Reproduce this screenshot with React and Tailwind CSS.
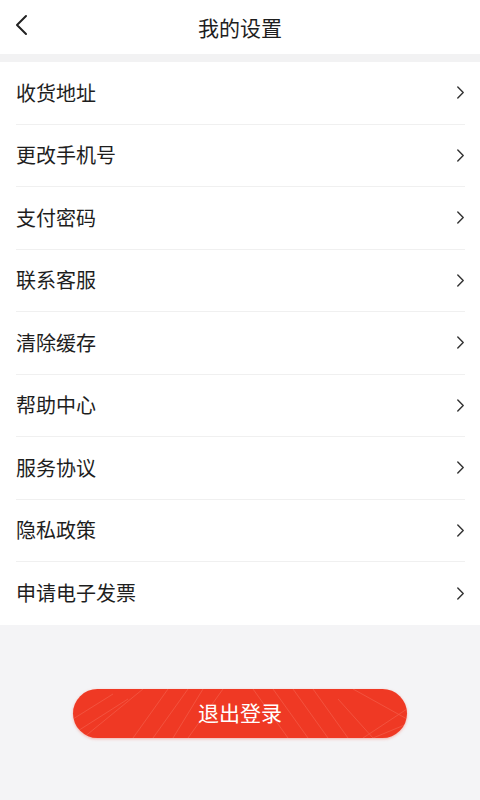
const items = [
  '收货地址',
  '更改手机号',
  '支付密码',
  '联系客服',
  '清除缓存',
  '帮助中心',
  '服务协议',
  '隐私政策',
  '申请电子发票',
];

function Chevron({ className }) {
  return (
    <svg viewBox="0 0 10 16" className={className} fill="none" stroke="currentColor" strokeWidth="1.6" strokeLinecap="round" strokeLinejoin="round">
      <path d="M2 2l6 6-6 6" />
    </svg>
  );
}

export default function App() {
  return (
    <div className="w-[480px] h-[800px] bg-[#f4f4f6] flex flex-col font-['Noto_Sans_CJK_SC',sans-serif] text-[#1e1e1e]">
      <header className="h-[54px] bg-white flex items-center relative shrink-0">
        <svg viewBox="0 0 14 22" className="absolute left-[14px] top-[14px] w-[14px] h-[22px] text-[#222]" fill="none" stroke="currentColor" strokeWidth="2" strokeLinecap="round" strokeLinejoin="round">
          <path d="M12 2L3 11l9 9" />
        </svg>
        <h1 className="flex-1 text-center text-[21px] leading-none">我的设置</h1>
      </header>
      <div className="h-[8px] bg-[#f2f2f3] shrink-0" />
      <ul className="bg-white">
        {items.map((label, i) => (
          <li key={label} className="h-[62.5px] pl-[16px] pr-[15px]">
            <div className={`h-full flex items-center justify-between ${i < items.length - 1 ? 'border-b border-[#f0f0f0]' : ''}`}>
              <span className="text-[20px] leading-none">{label}</span>
              <Chevron className="w-[9px] h-[15px] text-[#333]" />
            </div>
          </li>
        ))}
      </ul>
      <div className="flex-1 flex justify-center pt-[64px]">
        <button className="relative overflow-hidden w-[334px] h-[49px] rounded-full bg-[#ef3a24] text-white text-[21px] shadow-[0_1px_3px_rgba(239,58,36,0.35)]">
          <svg className="absolute inset-0 w-full h-full opacity-25" viewBox="0 0 334 49" preserveAspectRatio="none" fill="none" stroke="#ffb3a6" strokeWidth="0.8">
            <path d="M0 30L40 5M0 45L55 10M10 49L70 0M60 49L95 0M80 49L115 0M100 49L130 0M115 49L150 0M180 0L215 49M200 0L235 49M220 0L255 49M240 0L275 49M265 10L300 49M280 0L334 30M290 49L334 20M300 49L334 35" />
          </svg>
          <span className="relative">退出登录</span>
        </button>
      </div>
    </div>
  );
}
